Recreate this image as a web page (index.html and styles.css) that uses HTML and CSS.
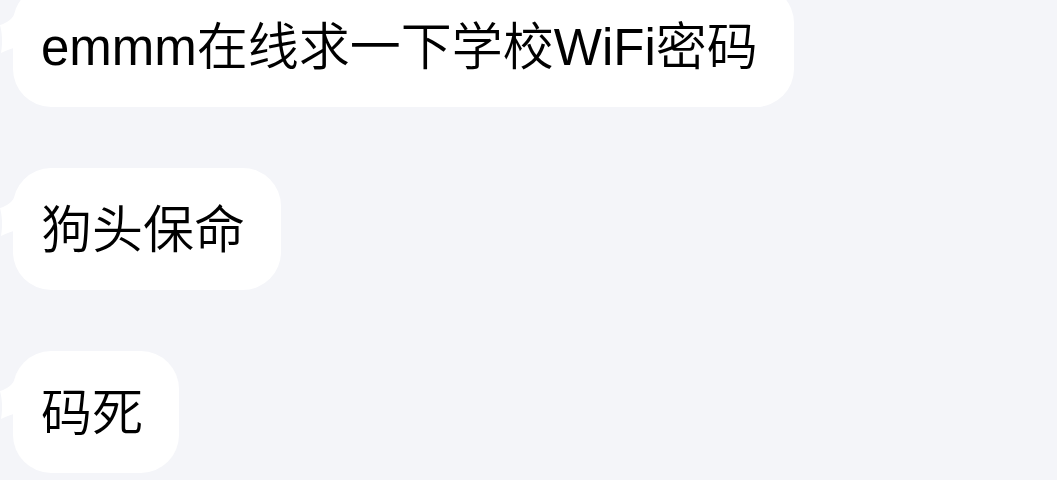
FILE: index.html
```html
<!DOCTYPE html>
<html lang="zh">
<head>
<meta charset="utf-8">
<title>chat</title>
<link rel="stylesheet" href="styles.css">
</head>
<body>
<div class="chat">
  <div class="msg">
    <svg class="tail" width="16" height="46" viewBox="0 0 16 46"><path d="M16 0 C13 8 7 12 0 14 C2 22 3 30 1 42 C7 39 12 37 16 37 Z" fill="#fff"/></svg>
    <div class="bubble">emmm在线求一下学校WiFi密码</div>
  </div>
  <div class="msg">
    <svg class="tail" width="16" height="46" viewBox="0 0 16 46"><path d="M16 0 C13 8 7 12 0 14 C2 22 3 30 1 42 C7 39 12 37 16 37 Z" fill="#fff"/></svg>
    <div class="bubble">狗头保命</div>
  </div>
  <div class="msg">
    <svg class="tail" width="16" height="46" viewBox="0 0 16 46"><path d="M16 0 C13 8 7 12 0 14 C2 22 3 30 1 42 C7 39 12 37 16 37 Z" fill="#fff"/></svg>
    <div class="bubble">码死</div>
  </div>
</div>
</body>
</html>
```
FILE: styles.css
```css
html, body {
  margin: 0;
  padding: 0;
  background: #f4f5f9;
  overflow: hidden;
}
body {
  width: 1057px;
  height: 480px;
  font-family: "Liberation Sans", "Noto Sans CJK SC", sans-serif;
  color: #000;
}
.chat {
  display: flex;
  flex-direction: column;
  align-items: flex-start;
  gap: 61px;
  margin-top: -15px;
  padding-left: 13px;
}
.msg {
  position: relative;
}
.tail {
  position: absolute;
  left: -13px;
  top: 26px;
  display: block;
}
.bubble {
  position: relative;
  background: #fff;
  border-radius: 38px;
  height: 122px;
  box-sizing: border-box;
  padding: 31px 36px 27px 28px;
  font-size: 51px;
  font-weight: 350;
  line-height: 64px;
  white-space: nowrap;
}
```
